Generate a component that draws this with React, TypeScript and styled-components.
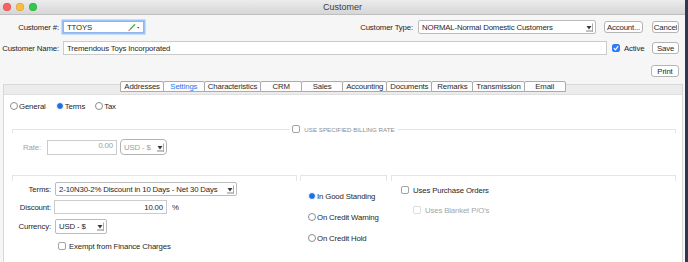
import React from "react";
import styled, { createGlobalStyle } from "styled-components";

const GlobalStyle = createGlobalStyle`
  html, body {
    margin: 0;
    padding: 0;
    background: #2f3752;
  }
  body {
    font-family: "Liberation Sans", Arial, sans-serif;
    font-size: 7.8px;
    letter-spacing: -0.15px;
    color: #1f1f1f;
  }
  * { box-sizing: border-box; }
`;

const Window = styled.div`
  width: 685px;
  height: 262px;
  background: #f6f6f6;
  overflow: hidden;
  display: flex;
  flex-direction: column;
`;

const TitleBar = styled.div`
  height: 15px;
  flex: none;
  display: grid;
  grid-template-columns: 1fr auto 1fr;
  align-items: center;
  background: linear-gradient(#ececec, #d6d6d6);
  border-bottom: 1px solid #bfbfbf;
`;

const Lights = styled.div`
  display: flex;
  gap: 5px;
  padding-left: 3px;
`;

const Light = styled.span<{ $c: string }>`
  width: 8px;
  height: 8px;
  border-radius: 50%;
  background: ${p => p.$c};
  box-shadow: inset 0 0 0 0.5px rgba(0, 0, 0, 0.18);
`;

const Title = styled.div`
  font-size: 9px;
  letter-spacing: 0;
  color: #3b3b3b;
`;

const Header = styled.div`
  display: flex;
  flex-direction: column;
  padding: 5px 6px 0 0;
`;

const Row = styled.div<{ $top?: number; $h?: number }>`
  display: flex;
  align-items: center;
  height: ${p => p.$h ?? 14}px;
  margin-top: ${p => p.$top ?? 0}px;
  flex: none;
`;

const Label = styled.span<{ $w?: number; $muted?: boolean }>`
  width: ${p => (p.$w ? `${p.$w}px` : "auto")};
  flex: none;
  text-align: right;
  white-space: nowrap;
  color: ${p => (p.$muted ? "#a3a3a3" : "#1f1f1f")};
`;

const Spacer = styled.div`
  flex: 1;
`;

const TextBox = styled.div<{ $w?: number; $ml?: number; $focus?: boolean; $h?: number; $align?: string; $muted?: boolean }>`
  width: ${p => (p.$w ? `${p.$w}px` : "auto")};
  flex: ${p => (p.$w ? "none" : "1")};
  height: ${p => p.$h ?? 14}px;
  margin-left: ${p => p.$ml ?? 0}px;
  background: #fff;
  border: 1px solid ${p => (p.$focus ? "#8fb7ef" : "#cbcbcb")};
  box-shadow: ${p => (p.$focus ? "0 0 0 1.5px #9cc3f7" : "none")};
  display: flex;
  align-items: ${p => (p.$muted ? "flex-start" : "center")};
  justify-content: ${p => p.$align ?? "flex-start"};
  padding: 0 3px;
  color: ${p => (p.$muted ? "#9d9d9d" : "#1f1f1f")};
  white-space: nowrap;
`;

const Combo = styled.div<{ $w: number; $ml?: number; $h?: number; $disabled?: boolean }>`
  width: ${p => p.$w}px;
  height: ${p => p.$h ?? 14}px;
  margin-left: ${p => p.$ml ?? 0}px;
  flex: none;
  background: #fff;
  border: ${p => (p.$disabled ? "1.5px solid #b3b3b3" : "1px solid #bcbcbc")};
  border-radius: ${p => (p.$disabled ? 4 : 2)}px;
  display: flex;
  align-items: center;
  padding: 0 2px 0 3px;
  color: ${p => (p.$disabled ? "#a0a0a0" : "#1f1f1f")};
  white-space: nowrap;
`;

const ComboText = styled.span`
  flex: 1;
  overflow: hidden;
`;

const Button = styled.div<{ $w: number; $ml?: number }>`
  width: ${p => p.$w}px;
  height: 12px;
  margin-left: ${p => p.$ml ?? 0}px;
  flex: none;
  background: #fff;
  border: 1px solid #b4b4b4;
  border-radius: 3px;
  display: flex;
  align-items: center;
  justify-content: center;
  white-space: nowrap;
`;

const Check = styled.span<{ $checked?: boolean; $disabled?: boolean; $ml?: number }>`
  width: 8px;
  height: 8px;
  flex: none;
  margin-left: ${p => p.$ml ?? 0}px;
  border-radius: 2px;
  border: 1px solid ${p => (p.$checked ? "#2f7cf6" : p.$disabled ? "#dcdcdc" : "#a2a2a2")};
  background: ${p => (p.$checked ? "#2f7cf6" : "#fff")};
  display: flex;
  align-items: center;
  justify-content: center;
`;

const CheckText = styled.span<{ $ml?: number; $muted?: boolean; $w?: number }>`
  margin-left: ${p => p.$ml ?? 4}px;
  width: ${p => (p.$w ? `${p.$w}px` : "auto")};
  flex: none;
  color: ${p => (p.$muted ? "#a5a5a5" : "#1f1f1f")};
  white-space: nowrap;
`;

const Panel = styled.div`
  margin: 7px 2px 0 3px;
  flex: 1;
  display: flex;
  flex-direction: column;
  background: #ececec;
  border: 1px solid #d8d8d8;
  border-bottom: none;
`;

const TabStrip = styled.div`
  height: 9px;
  flex: none;
  display: flex;
  justify-content: center;
  padding-left: 1px;
`;

const Tab = styled.div<{ $active?: boolean }>`
  margin-top: -4px;
  margin-left: -1px;
  height: 11px;
  min-width: 42px;
  padding: 0 3px;
  background: #fdfdfd;
  border: 1px solid #ababab;
  border-radius: 2px 2px 0 0;
  display: flex;
  align-items: center;
  justify-content: center;
  color: ${p => (p.$active ? "#2a78ea" : "#2a2a2a")};
  white-space: nowrap;
`;

const Content = styled.div`
  flex: 1;
  background: #fff;
  border-top: 1px solid #e0e0e0;
  display: flex;
  flex-direction: column;
`;

const RadioRow = styled.div`
  display: flex;
  align-items: center;
  gap: 10px;
  height: 10px;
  margin: 6px 0 0 6px;
`;

const RadioItem = styled.div`
  display: flex;
  align-items: center;
  height: 10px;
  white-space: nowrap;
`;

const RadioDot = styled.span<{ $on?: boolean }>`
  width: 8px;
  height: 8px;
  flex: none;
  margin-right: 1px;
  border-radius: 50%;
  border: ${p => (p.$on ? "1px solid #fff" : "1px solid #8e8e8e")};
  background: ${p => (p.$on ? "#1d6fe8" : "#fff")};
`;

const GroupRow = styled.div<{ $top: number }>`
  display: flex;
  align-items: flex-start;
  margin: ${p => p.$top}px 6px 0 8px;
  height: 8px;
`;

const GroupLine = styled.div<{ $side: "left" | "right" }>`
  flex: 1;
  height: 4px;
  margin-top: 4px;
  border-top: 1px solid #e5e5e5;
  border-${p => p.$side}: 1px solid #e5e5e5;
`;

const GroupTitle = styled.div`
  display: flex;
  align-items: center;
  height: 8px;
  padding: 0 3px 0 2px;
`;

const Caps = styled.span`
  margin-left: 4px;
  font-size: 6.2px;
  letter-spacing: 0;
  color: #8d8d8d;
  white-space: nowrap;
`;

const RateRow = styled.div`
  display: flex;
  align-items: center;
  height: 16px;
  margin: 6px 0 0 0;
`;

const Boxes = styled.div`
  display: flex;
  margin: 20px 6px 0 8px;
  flex: 1;
`;

const Box = styled.div<{ $w?: number; $ml?: number }>`
  width: ${p => (p.$w ? `${p.$w}px` : "auto")};
  flex: ${p => (p.$w ? "none" : "1")};
  margin-left: ${p => p.$ml ?? 0}px;
  display: flex;
  flex-direction: column;
`;

const BoxTop = styled.div`
  height: 6px;
  border: 1px solid #e5e5e5;
  border-bottom: none;
`;

const BoxBody = styled.div<{ $pt: number; $pl: number; $gap: number }>`
  display: flex;
  flex-direction: column;
  padding: ${p => p.$pt}px 0 0 ${p => p.$pl}px;
  gap: ${p => p.$gap}px;
`;

const Percent = styled.span`
  margin-left: 5px;
`;

const Arrow = () => (
  <svg width="8" height="9" viewBox="0 0 8 9" style={{ flex: "none" }}>
    <polygon points="1.5,3 6.5,3 4,6.5" fill="#3a3a3a" />
    <line x1="1" y1="8" x2="7" y2="8" stroke="#666" strokeWidth="0.8" />
    <line x1="7.6" y1="0.5" x2="7.6" y2="9" stroke="#8a8a8a" strokeWidth="0.8" />
  </svg>
);

const Pencil = () => (
  <svg width="13" height="9" viewBox="0 0 13 9" style={{ flex: "none" }}>
    <line x1="1.5" y1="8" x2="3" y2="6.5" stroke="#e98c98" strokeWidth="1.4" />
    <line x1="3" y1="6.5" x2="8" y2="1.2" stroke="#4cb54a" strokeWidth="1.4" />
    <polygon points="10,4 12.4,4 11.2,5.6" fill="#444" />
  </svg>
);

const Tick = () => (
  <svg width="6" height="6" viewBox="0 0 6 6">
    <polyline points="0.8,3.2 2.4,4.8 5.2,1.2" fill="none" stroke="#fff" strokeWidth="1.2" />
  </svg>
);

const tabs = ["Addresses", "Settings", "Characteristics", "CRM", "Sales", "Accounting", "Documents", "Remarks", "Transmission", "Email"];

export default function App() {
  return (
    <>
      <GlobalStyle />
      <Window>
        <TitleBar>
          <Lights>
            <Light $c="#fc605c" />
            <Light $c="#fdbc40" />
            <Light $c="#34c84a" />
          </Lights>
          <Title>Customer</Title>
          <div />
        </TitleBar>

        <Header>
          <Row>
            <Label $w={59}>Customer #:</Label>
            <TextBox $w={81} $ml={4} $h={12} $focus>
              <ComboText>TTOYS</ComboText>
              <Pencil />
            </TextBox>
            <Spacer />
            <Label>Customer Type:</Label>
            <Combo $w={178} $ml={5}>
              <ComboText>NORMAL-Normal Domestic Customers</ComboText>
              <Arrow />
            </Combo>
            <Button $w={39} $ml={8}>Account...</Button>
            <Button $w={27} $ml={9}>Cancel</Button>
          </Row>
          <Row $top={7}>
            <Label $w={59}>Customer Name:</Label>
            <TextBox $ml={4}>Tremendous Toys Incorporated</TextBox>
            <Check $checked $ml={5}>
              <Tick />
            </Check>
            <CheckText $w={28}>Active</CheckText>
            <Button $w={27}>Save</Button>
          </Row>
          <Row $top={10} $h={12}>
            <Spacer />
            <Button $w={28}>Print</Button>
          </Row>
        </Header>

        <Panel>
          <TabStrip>
            {tabs.map(t => (
              <Tab key={t} $active={t === "Settings"}>
                {t}
              </Tab>
            ))}
          </TabStrip>
          <Content>
            <RadioRow>
              <RadioItem>
                <RadioDot />
                General
              </RadioItem>
              <RadioItem>
                <RadioDot $on />
                Terms
              </RadioItem>
              <RadioItem>
                <RadioDot />
                Tax
              </RadioItem>
            </RadioRow>

            <GroupRow $top={14}>
              <GroupLine $side="left" />
              <GroupTitle>
                <Check />
                <Caps>USE SPECIFIED BILLING RATE</Caps>
              </GroupTitle>
              <GroupLine $side="right" />
            </GroupRow>

            <RateRow>
              <Label $w={37} $muted>
                Rate:
              </Label>
              <TextBox $w={70} $ml={6} $h={15} $align="flex-end" $muted>
                0.00
              </TextBox>
              <Combo $w={47} $ml={3} $h={16} $disabled>
                <ComboText>USD - $</ComboText>
                <Arrow />
              </Combo>
            </RateRow>

            <Boxes>
              <Box $w={285}>
                <BoxTop />
                <BoxBody $pt={1} $pl={0} $gap={4}>
                  <Row>
                    <Label $w={39}>Terms:</Label>
                    <Combo $w={182} $ml={4}>
                      <ComboText>2-10N30-2% Discount in 10 Days - Net 30 Days</ComboText>
                      <Arrow />
                    </Combo>
                  </Row>
                  <Row>
                    <Label $w={39}>Discount:</Label>
                    <TextBox $w={113} $ml={3} $align="flex-end">
                      10.00
                    </TextBox>
                    <Percent>%</Percent>
                  </Row>
                  <Row $top={1} $h={15}>
                    <Label $w={39}>Currency:</Label>
                    <Combo $w={52} $ml={4} $h={15}>
                      <ComboText>USD - $</ComboText>
                      <Arrow />
                    </Combo>
                  </Row>
                  <Row $top={4} $h={8}>
                    <Check $ml={46} />
                    <CheckText $ml={3}>Exempt from Finance Charges</CheckText>
                  </Row>
                </BoxBody>
              </Box>

              <Box $w={87} $ml={3}>
                <BoxTop />
                <BoxBody $pt={10} $pl={8} $gap={11}>
                  <RadioItem>
                    <RadioDot $on />
                    In Good Standing
                  </RadioItem>
                  <RadioItem>
                    <RadioDot />
                    On Credit Warning
                  </RadioItem>
                  <RadioItem>
                    <RadioDot />
                    On Credit Hold
                  </RadioItem>
                </BoxBody>
              </Box>

              <Box $ml={4}>
                <BoxTop />
                <BoxBody $pt={5} $pl={10} $gap={12}>
                  <Row $h={8}>
                    <Check />
                    <CheckText>Uses Purchase Orders</CheckText>
                  </Row>
                  <Row $h={8}>
                    <Check $disabled $ml={12} />
                    <CheckText $muted>Uses Blanket P/O's</CheckText>
                  </Row>
                </BoxBody>
              </Box>
            </Boxes>
          </Content>
        </Panel>
      </Window>
    </>
  );
}
